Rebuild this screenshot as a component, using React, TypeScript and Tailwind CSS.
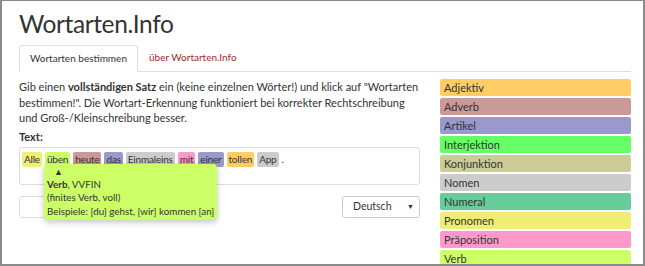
import React from "react";

const words: { t: string; c: string }[] = [
  { t: "Alle", c: "bg-[#eeee77]" },
  { t: "üben", c: "bg-[#ccff66]" },
  { t: "heute", c: "bg-[#cc9999]" },
  { t: "das", c: "bg-[#9999cc]" },
  { t: "Einmaleins", c: "bg-[#cccccc]" },
  { t: "mit", c: "bg-[#ff99cc]" },
  { t: "einer", c: "bg-[#9999cc]" },
  { t: "tollen", c: "bg-[#ffcc66]" },
  { t: "App", c: "bg-[#cccccc]" },
];

const legend: { t: string; c: string }[] = [
  { t: "Adjektiv", c: "bg-[#ffcc66]" },
  { t: "Adverb", c: "bg-[#cc9999]" },
  { t: "Artikel", c: "bg-[#9999cc]" },
  { t: "Interjektion", c: "bg-[#66ff66]" },
  { t: "Konjunktion", c: "bg-[#cccc99]" },
  { t: "Nomen", c: "bg-[#cccccc]" },
  { t: "Numeral", c: "bg-[#66cc99]" },
  { t: "Pronomen", c: "bg-[#eeee77]" },
  { t: "Präposition", c: "bg-[#ff99cc]" },
  { t: "Verb", c: "bg-[#ccff66]" },
];

export default function App() {
  return (
    <div
      className="w-[645px] h-[266px] overflow-hidden bg-white border-t border-l-2 border-r-2 border-b-2 border-[#8a8a8a] text-[#333] text-[11px]"
      style={{ fontFamily: 'Lato, "Liberation Sans", Arial, sans-serif' }}
    >
      <div className="pl-[17px] pr-[12px]">
        <h1 className="text-[24.5px] leading-[32px] mt-[7px] font-normal tracking-[-0.4px]">Wortarten.Info</h1>
        <div className="mt-[5px] flex items-end border-b border-[#dddddd] h-[27px]">
          <div className="h-[27px] -mb-px px-[10px] flex items-center border border-[#dddddd] border-b-white rounded-t-[3px] bg-white text-[10px]">
            Wortarten bestimmen
          </div>
          <div className="h-[27px] px-[11px] flex items-center text-[#a12a2a] text-[10px]">über Wortarten.Info</div>
        </div>
        <div className="flex">
          <div className="w-[401px]">
            <p className="mt-[7px] leading-[15.5px]">
              Gib einen <b>vollständigen Satz</b> ein (keine einzelnen Wörter!) und klick auf "Wortarten bestimmen!". Die Wortart-Erkennung funktioniert bei korrekter Rechtschreibung und Groß-/Kleinschreibung besser.
            </p>
            <div className="mt-[4px] font-bold leading-[14px]">Text:</div>
            <div className="relative mt-[3px] h-[38px] border border-[#dddddd] rounded-[3px] pl-[2px] pt-[4px] flex items-start gap-[3px] text-[10px] tracking-[-0.2px]">
              {words.map((w) => (
                <span key={w.t} className={`${w.c} px-[2px] leading-[15px] rounded-[2px]`}>
                  {w.t}
                </span>
              ))}
              <span className="leading-[15px]">.</span>
              <div className="absolute left-[24px] top-[16px] w-[173px] h-[56px] bg-[#ccff66] rounded-[4px] shadow-[0_2px_6px_rgba(0,0,0,0.25)] pl-[3px] pt-[2px] leading-[13.5px] z-10 text-[9.8px] tracking-normal">
                <div className="pl-[7px] text-[9px] leading-[12px]">▲</div>
                <div>
                  <b>Verb</b>, VVFIN
                </div>
                <div>(finites Verb, voll)</div>
                <div className="whitespace-nowrap">Beispiele: [du] gehst, [wir] kommen [an]</div>
              </div>
            </div>
            <div className="mt-[11px] flex justify-between">
              <div className="w-[160px] h-[22px] border border-[#dddddd] rounded-[3px]"></div>
              <div className="w-[78px] h-[22px] border border-[#cccccc] rounded-[3px] flex items-center justify-between pl-[10px] pr-[5px] text-[10.5px]">
                <span>Deutsch</span>
                <span className="text-[7px]">▼</span>
              </div>
            </div>
          </div>
          <div className="ml-[20px] flex-1 pt-[7px] flex flex-col gap-[2px]">
            {legend.map((l) => (
              <div key={l.t} className={`${l.c} h-[17px] rounded-[2px] pl-[4px] leading-[17px]`}>
                {l.t}
              </div>
            ))}
          </div>
        </div>
      </div>
    </div>
  );
}
